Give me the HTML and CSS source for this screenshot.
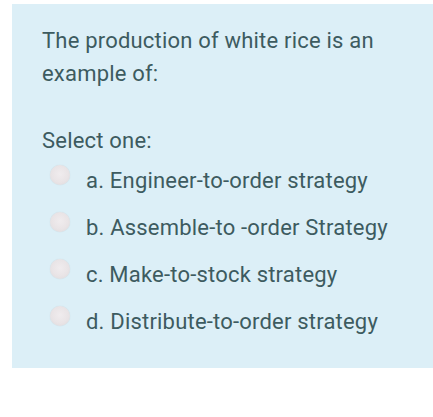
FILE: index.html
```html
<!DOCTYPE html>
<html>
<head>
<meta charset="utf-8">
<link rel="stylesheet" href="styles.css">
</head>
<body>
<div class="panel">
  <p class="question">The production of white rice is an example of:</p>
  <div class="prompt">Select one:</div>
  <div class="options">
    <div class="option"><span class="radio"></span><span class="label">a. Engineer-to-order strategy</span></div>
    <div class="option"><span class="radio"></span><span class="label">b. Assemble-to -order Strategy</span></div>
    <div class="option"><span class="radio"></span><span class="label">c. Make-to-stock strategy</span></div>
    <div class="option"><span class="radio"></span><span class="label">d. Distribute-to-order strategy</span></div>
  </div>
</div>
</body>
</html>
```

FILE: styles.css
```css
html, body {
  margin: 0;
  padding: 0;
  background: #ffffff;
}
body {
  padding: 4px 0 0 12px;
  font-family: Roboto, "Liberation Sans", sans-serif;
  color: #3d5b60;
  letter-spacing: 0.2px;
}
.panel {
  background: #dceff7;
  height: 364px;
  box-sizing: border-box;
  padding: 20px 20px 0 30px;
}
.question {
  margin: 0;
  font-size: 22px;
  line-height: 33px;
  width: 350px;
}
.prompt {
  margin-top: 36px;
  font-size: 22px;
  line-height: 30px;
}
.options {
  display: flex;
  flex-direction: column;
  gap: 17px;
  margin-top: 9px;
  padding-left: 8px;
}
.option {
  display: flex;
  align-items: center;
  height: 30px;
  font-size: 22px;
}
.radio {
  width: 20px;
  height: 20px;
  border-radius: 50%;
  background: radial-gradient(circle at 50% 45%, #f0ecee 0%, #e9e4e6 55%, #dcd8da 100%);
  box-shadow: 0 0 1px rgba(0,0,0,0.15);
  margin-right: 16px;
  margin-bottom: 10px;
  flex: none;
}
```
